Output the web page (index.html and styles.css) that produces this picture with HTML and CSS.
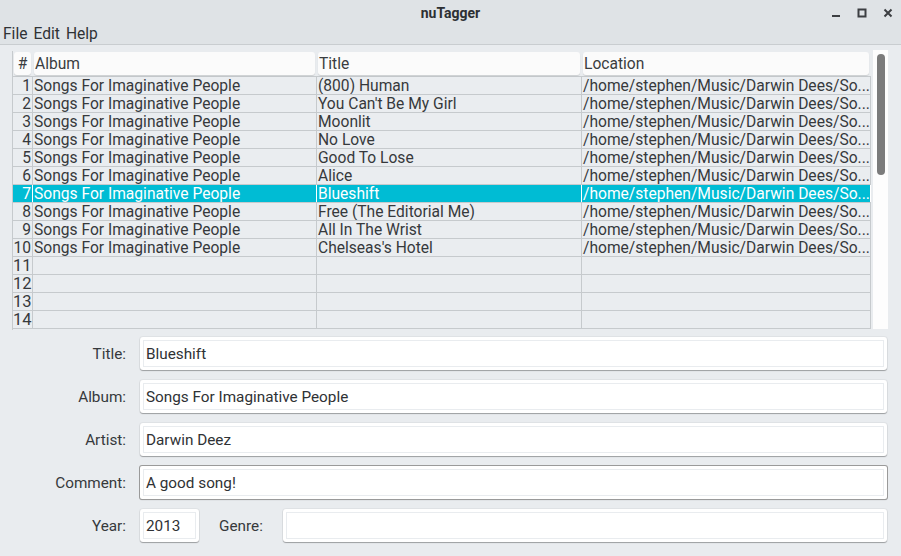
FILE: index.html
```html
<!DOCTYPE html>
<html>
<head>
<meta charset="utf-8">
<link rel="stylesheet" href="styles.css">
</head>
<body>
<div class="window">
  <div class="titlebar">
    <span class="title">nuTagger</span>
    <div class="wbtns">
      <svg width="12" height="12" viewBox="0 0 12 12"><rect x="2" y="8" width="8" height="2" fill="#3c3f42"/></svg>
      <svg width="12" height="12" viewBox="0 0 12 12"><rect x="2.5" y="2.5" width="7" height="7" fill="none" stroke="#3c3f42" stroke-width="2"/></svg>
      <svg width="12" height="12" viewBox="0 0 12 12"><path d="M2.5 2.5 L9.5 9.5 M9.5 2.5 L2.5 9.5" stroke="#3c3f42" stroke-width="2"/></svg>
    </div>
  </div>
  <div class="menubar"><span>File</span><span>Edit</span><span>Help</span></div>
  <div class="main">
    <div class="tablewrap">
      <div class="table">
        <div class="hrow">
          <div class="hcell c0">#</div>
          <div class="hcell c1">Album</div>
          <div class="hcell c2">Title</div>
          <div class="hcell c3">Location</div>
        </div>
        <div class="row"><div class="c0 num">1</div><div class="c1">Songs For Imaginative People</div><div class="c2">(800) Human</div><div class="c3">/home/stephen/Music/Darwin Dees/So...</div></div>
        <div class="row"><div class="c0 num">2</div><div class="c1">Songs For Imaginative People</div><div class="c2">You Can't Be My Girl</div><div class="c3">/home/stephen/Music/Darwin Dees/So...</div></div>
        <div class="row"><div class="c0 num">3</div><div class="c1">Songs For Imaginative People</div><div class="c2">Moonlit</div><div class="c3">/home/stephen/Music/Darwin Dees/So...</div></div>
        <div class="row"><div class="c0 num">4</div><div class="c1">Songs For Imaginative People</div><div class="c2">No Love</div><div class="c3">/home/stephen/Music/Darwin Dees/So...</div></div>
        <div class="row"><div class="c0 num">5</div><div class="c1">Songs For Imaginative People</div><div class="c2">Good To Lose</div><div class="c3">/home/stephen/Music/Darwin Dees/So...</div></div>
        <div class="row"><div class="c0 num">6</div><div class="c1">Songs For Imaginative People</div><div class="c2">Alice</div><div class="c3">/home/stephen/Music/Darwin Dees/So...</div></div>
        <div class="row sel"><div class="c0 num">7</div><div class="c1">Songs For Imaginative People</div><div class="c2">Blueshift</div><div class="c3">/home/stephen/Music/Darwin Dees/So...</div></div>
        <div class="row"><div class="c0 num">8</div><div class="c1">Songs For Imaginative People</div><div class="c2">Free (The Editorial Me)</div><div class="c3">/home/stephen/Music/Darwin Dees/So...</div></div>
        <div class="row"><div class="c0 num">9</div><div class="c1">Songs For Imaginative People</div><div class="c2">All In The Wrist</div><div class="c3">/home/stephen/Music/Darwin Dees/So...</div></div>
        <div class="row"><div class="c0 num">10</div><div class="c1">Songs For Imaginative People</div><div class="c2">Chelseas's Hotel</div><div class="c3">/home/stephen/Music/Darwin Dees/So...</div></div>
        <div class="row"><div class="c0 num big">11</div><div class="c1"></div><div class="c2"></div><div class="c3"></div></div>
        <div class="row"><div class="c0 num big">12</div><div class="c1"></div><div class="c2"></div><div class="c3"></div></div>
        <div class="row"><div class="c0 num big">13</div><div class="c1"></div><div class="c2"></div><div class="c3"></div></div>
        <div class="row"><div class="c0 num big">14</div><div class="c1"></div><div class="c2"></div><div class="c3"></div></div>
      </div>
      <div class="scrollbar"><div class="thumb"></div></div>
    </div>
    <div class="form">
      <label class="lbl">Title:</label><div class="input span3">Blueshift</div>
      <label class="lbl">Album:</label><div class="input span3">Songs For Imaginative People</div>
      <label class="lbl">Artist:</label><div class="input span3">Darwin Deez</div>
      <label class="lbl">Comment:</label><div class="input span3 focus">A good song!</div>
      <label class="lbl">Year:</label><div class="input">2013</div><label class="lbl genre">Genre:</label><div class="input"></div>
    </div>
  </div>
</div>
</body>
</html>
```

FILE: styles.css
```css
* { box-sizing: border-box; }
html, body { margin: 0; padding: 0; }
body {
  width: 901px;
  height: 556px;
  overflow: hidden;
  background: #e9ecef;
  font-family: Roboto, "Noto Sans", sans-serif;
  color: #36393c;
}
.window { display: flex; flex-direction: column; height: 556px; }
.titlebar {
  height: 26px;
  background: #dfe3e6;
  display: flex;
  align-items: center;
  justify-content: center;
  position: relative;
}
.title { font-weight: bold; font-size: 14px; color: #2d3033; }
.wbtns {
  position: absolute;
  right: 7px;
  top: 7px;
  display: flex;
  gap: 14px;
}
.menubar {
  height: 19px;
  background: #dfe3e6;
  border-bottom: 1px solid #c9cdd0;
  display: flex;
  gap: 6px;
  padding-left: 3px;
  font-size: 15.6px;
  line-height: 17px;
  color: #2f3235;
}
.main { padding: 6px 13px 0 12px; }
.tablewrap { display: flex; gap: 2px; height: 279px; }
.table {
  width: 859px;
  font-size: 15.6px;
  border-left: 1px solid #c6cacd;
}
.hrow {
  display: grid;
  grid-template-columns: 20px 284px 265px 289px;
  height: 26px;
  padding-top: 1px;
  border-bottom: 1px solid #c6cacd;
  background: #e9ecef;
}
.hcell {
  background: #fbfbfb;
  border-radius: 3px;
  box-shadow: 0 1px 1px rgba(0,0,0,0.12);
  height: 23px;
  line-height: 25px;
  margin: 0 2px 0 1px;
  padding-left: 1px;
  color: #3a3d40;
}
.hcell.c0 { text-align: center; padding-left: 0; }
.row {
  display: grid;
  grid-template-columns: 20px 284px 265px 289px;
  height: 18px;
  line-height: 18px;
  border-bottom: 1px solid #c6cacd;
  background: #eaedf0;
}
.row > div {
  border-right: 1px solid #c6cacd;
  padding-left: 1px;
  white-space: nowrap;
  overflow: hidden;
}
.row > .num { text-align: right; padding-right: 1px; padding-left: 0; }
.row > .num.big { font-size: 16.5px; }
.row.sel { background: #00bcd4; color: #ffffff; }
.row.sel > div { border-right-color: #ffffff; }
.scrollbar {
  width: 16px;
  height: 279px;
  background: #fdfdfd;
  position: relative;
  margin-top: -1px;
}
.thumb {
  position: absolute;
  left: 4px;
  top: 4px;
  width: 8px;
  height: 121px;
  border-radius: 4px;
  background: #7b7b7b;
}
.form {
  display: grid;
  grid-template-columns: 128px 59px 84px 604px;
  row-gap: 10px;
  margin-top: 7px;
  font-size: 15.3px;
}
.lbl {
  text-align: right;
  padding-right: 14px;
  height: 33px;
  line-height: 35px;
  color: #36393c;
}
.lbl.genre { text-align: left; padding-left: 20px; padding-right: 0; }
.input {
  height: 33px;
  background: #ffffff;
  border-radius: 3px;
  box-shadow: 0 1px 1px rgba(0,0,0,0.3), 0 0 0 1px rgba(0,0,0,0.04);
  padding: 4px 3px 2px 6px;
  position: relative;
  line-height: 27px;
  color: #2f3235;
}
.input::before {
  content: "";
  position: absolute;
  inset: 3px;
  border: 1px solid #e9ecef;
  pointer-events: none;
}
.span3 { grid-column: span 3; }
.input.focus { box-shadow: 0 0 0 1px #9a9a9a, 0 1px 1px rgba(0,0,0,0.35); border-radius: 2px; }
```
